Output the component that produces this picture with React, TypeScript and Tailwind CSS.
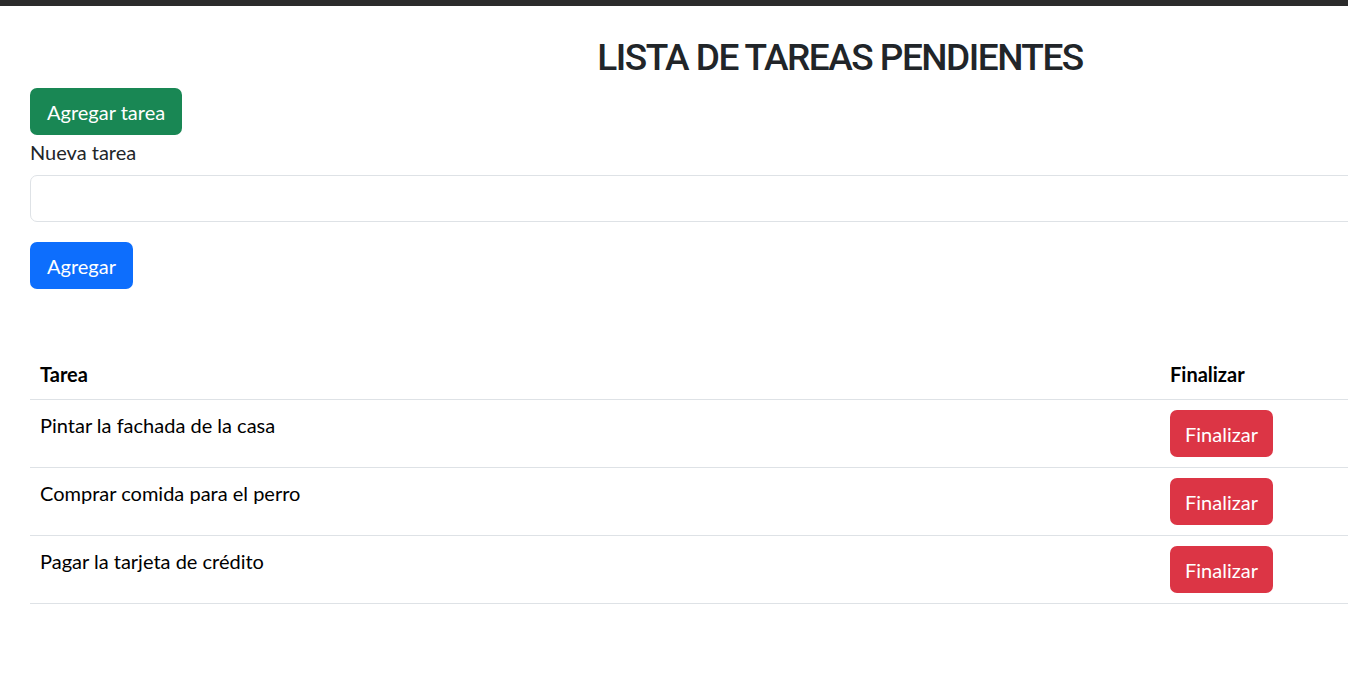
import { useState } from 'react';

// Lista de tareas pendientes (estilo Bootstrap a 125%)
const tareasIniciales = [
  'Pintar la fachada de la casa',
  'Comprar comida para el perro',
  'Pagar la tarjeta de crédito',
];

export default function App() {
  const [tareas, setTareas] = useState<string[]>(tareasIniciales);
  const [nueva, setNueva] = useState('');

  const agregar = () => {
    if (!nueva.trim()) return;
    setTareas([...tareas, nueva.trim()]);
    setNueva('');
  };

  return (
    <div
      className="min-h-[700px] w-full overflow-hidden bg-white text-[20px] leading-[30px] text-[#212529]"
      style={{ fontFamily: 'Lato, "Noto Sans", sans-serif' }}
    >
      <div className="h-[6px] w-full bg-[#2b2b2b]" />
      <div className="ml-[30px] w-[1620px] pt-[28px]">
        <h2
          className="text-center text-[37px] font-medium leading-[48px] tracking-[-1.5px]"
          style={{ fontFamily: 'Roboto, sans-serif' }}
        >
          LISTA DE TAREAS PENDIENTES
        </h2>

        <button className="mt-[6px] h-[47px] rounded-[7px] bg-[#198754] px-[17px] text-white">Agregar tarea</button>

        <div className="mt-[2px]">
          <label className="mb-[8px] block">Nueva tarea</label>
          <input
            value={nueva}
            onChange={(e) => setNueva(e.target.value)}
            className="block h-[47px] w-full rounded-[7px] border border-[#dee2e6] px-[15px] outline-none"
          />
          <button onClick={agregar} className="mt-[20px] h-[47px] rounded-[7px] bg-[#0d6efd] px-[17px] text-white">
            Agregar
          </button>
        </div>

        {/* Tabla de tareas */}
        <table className="mt-[60px] w-full border-collapse text-black">
          <thead>
            <tr className="border-b border-[#dee2e6]">
              <th className="w-[1130px] px-[10px] py-[10px] text-left font-bold">Tarea</th>
              <th className="px-[10px] py-[10px] text-left font-bold">Finalizar</th>
            </tr>
          </thead>
          <tbody>
            {tareas.map((t, i) => (
              <tr key={i} className="border-b border-[#dee2e6]">
                <td className="px-[10px] py-[10px] align-top">{t}</td>
                <td className="px-[10px] py-[10px] align-top">
                  <button
                    onClick={() => setTareas(tareas.filter((_, j) => j !== i))}
                    className="h-[47px] rounded-[7px] bg-[#dc3545] px-[15px] text-white"
                  >
                    Finalizar
                  </button>
                </td>
              </tr>
            ))}
          </tbody>
        </table>
      </div>
    </div>
  );
}
